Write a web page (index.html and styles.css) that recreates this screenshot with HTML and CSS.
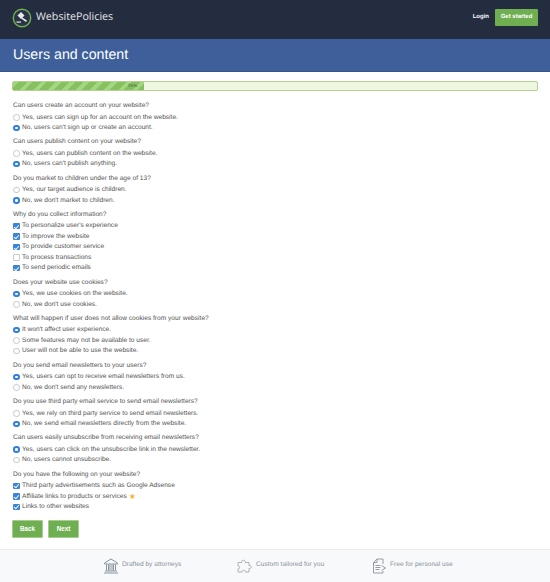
FILE: index.html
```html
<!DOCTYPE html>
<html lang="en">

<head>
  <meta charset="utf-8">
  <title>Users and content</title>
  <link rel="stylesheet" href="styles.css">
</head>

<body>
  <header class="topbar">
    <div class="brand">
      <svg class="brand-logo" width="20" height="20" viewBox="0 0 20 20">
        <circle cx="10" cy="10" r="8.7" fill="#2b3447" stroke="#6fb04e" stroke-width="1.4" />
        <path d="M5.500 7.500l3.500-3.500 3.500 3.500-3.500 3.500z" fill="#e8e8e8" />
        <path d="M9.500 9l5.500 3.500-1 1.500-5.500-4z" fill="#e8e8e8" />
        <path d="M4.500 13.500h4.500v1.200h-4.500z" fill="#e8e8e8" />
      </svg>
      <span class="brand-name">WebsitePolicies</span>
    </div>
    <nav class="topnav">
      <a class="login" href="#">Login</a>
      <a class="get-started" href="#">Get started</a>
    </nav>
  </header>

  <div class="title-band">
    <h1>Users and content</h1>
  </div>

  <main class="content">
    <div class="progress">
      <div class="progress-fill">25%</div>
    </div>

    <form>
      <div class="question">
        <div class="question-label">Can users create an account on your website?</div>
        <label class="option"><input type="radio" name="account">Yes, users can sign up for an account on the website.</label>
        <label class="option"><input type="radio" name="account" checked>No, users can't sign up or create an account.</label>
      </div>

      <div class="question">
        <div class="question-label">Can users publish content on your website?</div>
        <label class="option"><input type="radio" name="publish">Yes, users can publish content on the website.</label>
        <label class="option"><input type="radio" name="publish" checked>No, users can't publish anything.</label>
      </div>

      <div class="question">
        <div class="question-label">Do you market to children under the age of 13?</div>
        <label class="option"><input type="radio" name="children">Yes, our target audience is children.</label>
        <label class="option"><input type="radio" name="children" checked>No, we don't market to children.</label>
      </div>

      <div class="question">
        <div class="question-label">Why do you collect information?</div>
        <label class="option"><input type="checkbox" checked>To personalize user's experience</label>
        <label class="option"><input type="checkbox" checked>To improve the website</label>
        <label class="option"><input type="checkbox" checked>To provide customer service</label>
        <label class="option"><input type="checkbox">To process transactions</label>
        <label class="option"><input type="checkbox" checked>To send periodic emails</label>
      </div>

      <div class="question">
        <div class="question-label">Does your website use cookies?</div>
        <label class="option"><input type="radio" name="cookies" checked>Yes, we use cookies on the website.</label>
        <label class="option"><input type="radio" name="cookies">No, we don't use cookies.</label>
      </div>

      <div class="question">
        <div class="question-label">What will happen if user does not allow cookies from your website?</div>
        <label class="option"><input type="radio" name="nocookies" checked>It won't affect user experience.</label>
        <label class="option"><input type="radio" name="nocookies">Some features may not be available to user.</label>
        <label class="option"><input type="radio" name="nocookies">User will not be able to use the website.</label>
      </div>

      <div class="question">
        <div class="question-label">Do you send email newsletters to your users?</div>
        <label class="option"><input type="radio" name="newsletters" checked>Yes, users can opt to receive email newsletters from us.</label>
        <label class="option"><input type="radio" name="newsletters">No, we don't send any newsletters.</label>
      </div>

      <div class="question">
        <div class="question-label">Do you use third party email service to send email newsletters?</div>
        <label class="option"><input type="radio" name="thirdparty">Yes, we rely on third party service to send email newsletters.</label>
        <label class="option"><input type="radio" name="thirdparty" checked>No, we send email newsletters directly from the website.</label>
      </div>

      <div class="question">
        <div class="question-label">Can users easily unsubscribe from receiving email newsletters?</div>
        <label class="option"><input type="radio" name="unsubscribe" checked>Yes, users can click on the unsubscribe link in the newsletter.</label>
        <label class="option"><input type="radio" name="unsubscribe">No, users cannot unsubscribe.</label>
      </div>

      <div class="question">
        <div class="question-label">Do you have the following on your website?</div>
        <label class="option"><input type="checkbox" checked>Third party advertisements such as Google Adsense</label>
        <label class="option"><input type="checkbox" checked>Affiliate links to products or services <span class="star">★</span></label>
        <label class="option"><input type="checkbox" checked>Links to other websites</label>
      </div>

      <div class="form-buttons">
        <button type="button" class="btn">Back</button>
        <button type="button" class="btn">Next</button>
      </div>
    </form>
  </main>

  <footer class="perks">
    <div class="perk">
      <svg width="16" height="16" viewBox="0 0 16 16" fill="none" stroke="#8a939c" stroke-width="1">
        <path d="M1.500 5L8 1l6.500 4v1h-13z" />
        <path d="M3.500 6.500v6M5.500 6.500v6M7 6.500v6M9 6.500v6M10.500 6.500v6M12.500 6.500v6" />
        <path d="M2 13h12M1 15h14" />
      </svg>
      <span>Drafted by attorneys</span>
    </div>
    <div class="perk">
      <svg width="16" height="16" viewBox="0 0 16 16" fill="none" stroke="#a3aab1" stroke-width="0.9">
        <path d="M1 4.500h3.800c-1-3 4.200-3 3.400 0H12v3c2.800-1 2.800 4 0 3v3.500H8.300c.8-2.400-3.800-2.400-3.200 0H1v-3.200c2.200.8 2.200-3.600 0-2.800z" />
      </svg>
      <span>Custom tailored for you</span>
    </div>
    <div class="perk">
      <svg width="16" height="16" viewBox="0 0 16 16" fill="none" stroke="#8a939c" stroke-width="0.9">
        <path d="M6 1h6v5M6 1L2.500 4.500V15H12v-2" />
        <path d="M6 1v3.500H2.500" />
        <path d="M4.500 7.500h5M4.500 9.500h5M4.500 11.500h4" />
        <path d="M10.500 7.500l4 2.500-4 2.500" />
      </svg>
      <span>Free for personal use</span>
    </div>
  </footer>
</body>

</html>
```

FILE: styles.css
```css
* {
  box-sizing: border-box;
}

body {
  margin: 0;
  font-family: "Liberation Sans", Arial, sans-serif;
  font-size: 6.6px;
  line-height: 10.5px;
  color: #555;
  background-color: #fff;
  text-rendering: geometricPrecision;
}

.topbar {
  display: flex;
  align-items: center;
  justify-content: space-between;
  height: 39px;
  padding: 0 12px 4px 12px;
  background-color: #242c3f;
}

.brand {
  display: flex;
  align-items: center;
  gap: 4px;
}

.brand-name {
  font-family: "Open Sans", sans-serif;
  font-size: 10.7px;
  color: #e4e6ea;
}

.topnav {
  display: flex;
  align-items: center;
  gap: 6px;
}

.login {
  font-size: 6px;
  color: #fff;
  text-decoration: none;
  font-weight: bold;
}

.get-started {
  width: 43px;
  height: 17px;
  font-size: 6px;
  line-height: 17px;
  text-align: center;
  color: #fff;
  text-decoration: none;
  font-weight: bold;
  background-color: #6fae51;
  border-radius: 1px;
}

.title-band {
  height: 33px;
  padding: 0 13px;
  display: flex;
  align-items: center;
  background-color: #3e5f9a;
  border-bottom: 1px solid #38568c;
}

.title-band h1 {
  margin: 0;
  font-size: 14.2px;
  font-weight: normal;
  color: #fff;
  line-height: 20px;
}

.content {
  padding: 9px 12px 0 12px;
}

.progress {
  height: 10px;
  border: 1px solid #b7cf93;
  border-radius: 2px;
  background-color: #eef8e0;
  margin-bottom: 10px;
}

.progress-fill {
  width: 25%;
  height: 100%;
  padding-right: 7px;
  text-align: right;
  font-size: 4.5px;
  line-height: 8px;
  color: #4d5a40;
  background-color: #85c25f;
  background-image: repeating-linear-gradient(135deg, #a3d681 0, #a3d681 4px, #85c25f 4px, #85c25f 10px);
}

.question {
  margin-bottom: 3.8px;
  padding-left: 1px;
}

.question-label {
  margin-bottom: 1px;
}

.option {
  display: flex;
  align-items: center;
  height: 10.5px;
}

.option input {
  appearance: none;
  -webkit-appearance: none;
  flex: none;
  position: relative;
  width: 6.5px;
  height: 6.5px;
  margin: 0 2.5px 1px 0;
  background-color: #fff;
  border: 1px solid #c9c9c9;
}

.option input[type="radio"] {
  border-radius: 50%;
}

.option input[type="radio"]:checked {
  border: 2px solid #2f7fdc;
}

.option input[type="checkbox"] {
  border-radius: 1px;
}

.option input[type="checkbox"]:checked {
  border: none;
  background-color: #3a85dc;
}

.option input[type="checkbox"]:checked::after {
  content: "";
  position: absolute;
  left: 2.2px;
  top: 0.7px;
  width: 2px;
  height: 3.8px;
  border: solid #fff;
  border-width: 0 1px 1px 0;
  transform: rotate(40deg);
}

.star {
  margin-left: 2px;
  font-family: "DejaVu Sans", sans-serif;
  font-size: 8px;
  color: #f4b42c;
}

.form-buttons {
  display: flex;
  gap: 5px;
  margin-top: 7px;
}

.btn {
  width: 31px;
  height: 18px;
  padding: 0;
  font-family: inherit;
  font-size: 6.3px;
  font-weight: bold;
  color: #fff;
  background-color: #70ae52;
  border: 1px solid #a6cd8f;
  border-radius: 1px;
}

.perks {
  display: flex;
  align-items: center;
  height: 33px;
  margin-top: 11px;
  padding-left: 103px;
  background-color: #f8f9fa;
  border-top: 1px solid #ececec;
  color: #8a939c;
}

.perk {
  display: flex;
  align-items: center;
  gap: 3px;
  width: 134px;
}
```
